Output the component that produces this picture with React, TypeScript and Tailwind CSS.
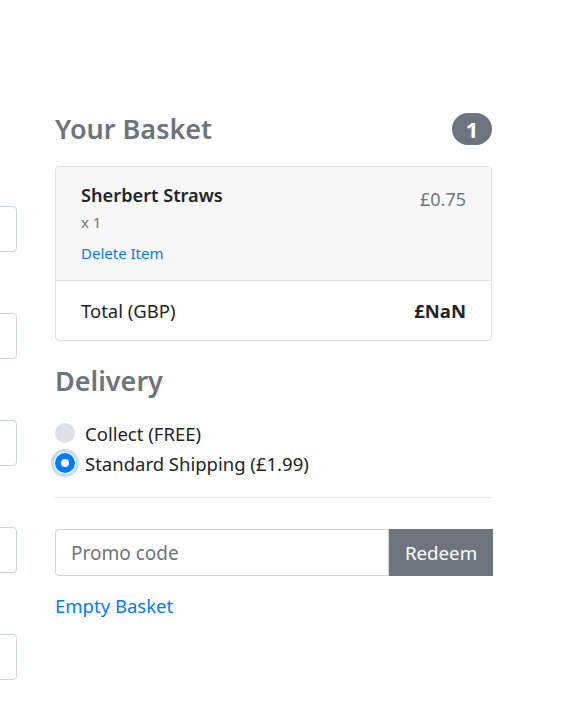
const leftInputs = [0, 1, 2, 3, 4];

function Radio({ checked }: { checked: boolean }) {
  return checked ? (
    <span className="flex h-5 w-5 shrink-0 items-center justify-center rounded-full bg-[#007bff] shadow-[0_0_0_1px_#fff,0_0_0_4px_rgba(0,123,255,0.25)]">
      <span className="h-2 w-2 rounded-full bg-white" />
    </span>
  ) : (
    <span className="h-5 w-5 shrink-0 rounded-full bg-[#dee2e6]" />
  );
}

export default function App() {
  return (
    <div className="flex h-[704px] w-[582px] overflow-hidden bg-white font-['Noto_Sans',sans-serif] text-[18.5px] leading-[1.5] text-[#212529]">
      {/* Left form column, cut off at the edge */}
      <div className="flex w-[17px] shrink-0 flex-col items-end gap-[61px] overflow-hidden pt-[206px]">
        {leftInputs.map((i) => (
          <div
            key={i}
            className="h-[46px] w-[200px] shrink-0 rounded-[4px] border border-[#ced4da] bg-white"
          />
        ))}
      </div>

      {/* Basket column */}
      <div className="ml-[38px] w-[437px] shrink-0 pt-[111px]">
        <div className="mb-[19px] flex h-[36px] items-center justify-between">
          <h4 className="text-[27px] font-semibold leading-[1.2] text-[#6c757d]">Your Basket</h4>
          <span className="flex h-[32px] w-[40px] items-center justify-center rounded-full bg-[#6c757d] text-[22px] font-bold leading-none text-white">
            1
          </span>
        </div>

        <div className="rounded-[4px] border border-[#dfdfdf]">
          <div className="flex h-[113px] justify-between rounded-t-[4px] bg-[#f7f7f7] px-[25px] pt-[15px]">
            <div>
              <h6 className="text-[18.2px] font-semibold leading-[1.5]">Sherbert Straws</h6>
              <p className="mt-[4px] text-[15px] leading-[1.2] text-[#6c757d]">x 1</p>
              <a className="mt-[13px] block text-[15px] leading-[1.2] text-[#007bff]">Delete Item</a>
            </div>
            <span className="pt-[4px] text-[18px] text-[#6c757d]">£0.75</span>
          </div>
          <div className="flex h-[60px] items-center justify-between border-t border-[#dfdfdf] px-[25px]">
            <span>Total (GBP)</span>
            <strong className="font-bold">£NaN</strong>
          </div>
        </div>

        <h4 className="mt-[24px] text-[27px] font-semibold leading-[1.2] text-[#6c757d]">Delivery</h4>

        <div className="mt-[21px] flex flex-col">
          <label className="flex h-[30px] items-center gap-[10px]">
            <Radio checked={false} />
            <span>Collect (FREE)</span>
          </label>
          <label className="flex h-[30px] items-center gap-[10px]">
            <Radio checked />
            <span>Standard Shipping (£1.99)</span>
          </label>
        </div>

        <hr className="mt-[19px] mb-[31px] border-t border-[#e5e5e5]" />

        <div className="flex h-[47px] w-[438px]">
          <input
            className="h-full min-w-0 flex-1 rounded-l-[4px] border border-[#ced4da] px-[15px] text-[19px] outline-none placeholder:text-[#6c757d]"
            placeholder="Promo code"
          />
          <button className="h-full w-[104px] bg-[#6c757d] text-[18.7px] text-white">Redeem</button>
        </div>

        <a className="mt-[16px] block text-[#007bff]">Empty Basket</a>
      </div>
    </div>
  );
}
